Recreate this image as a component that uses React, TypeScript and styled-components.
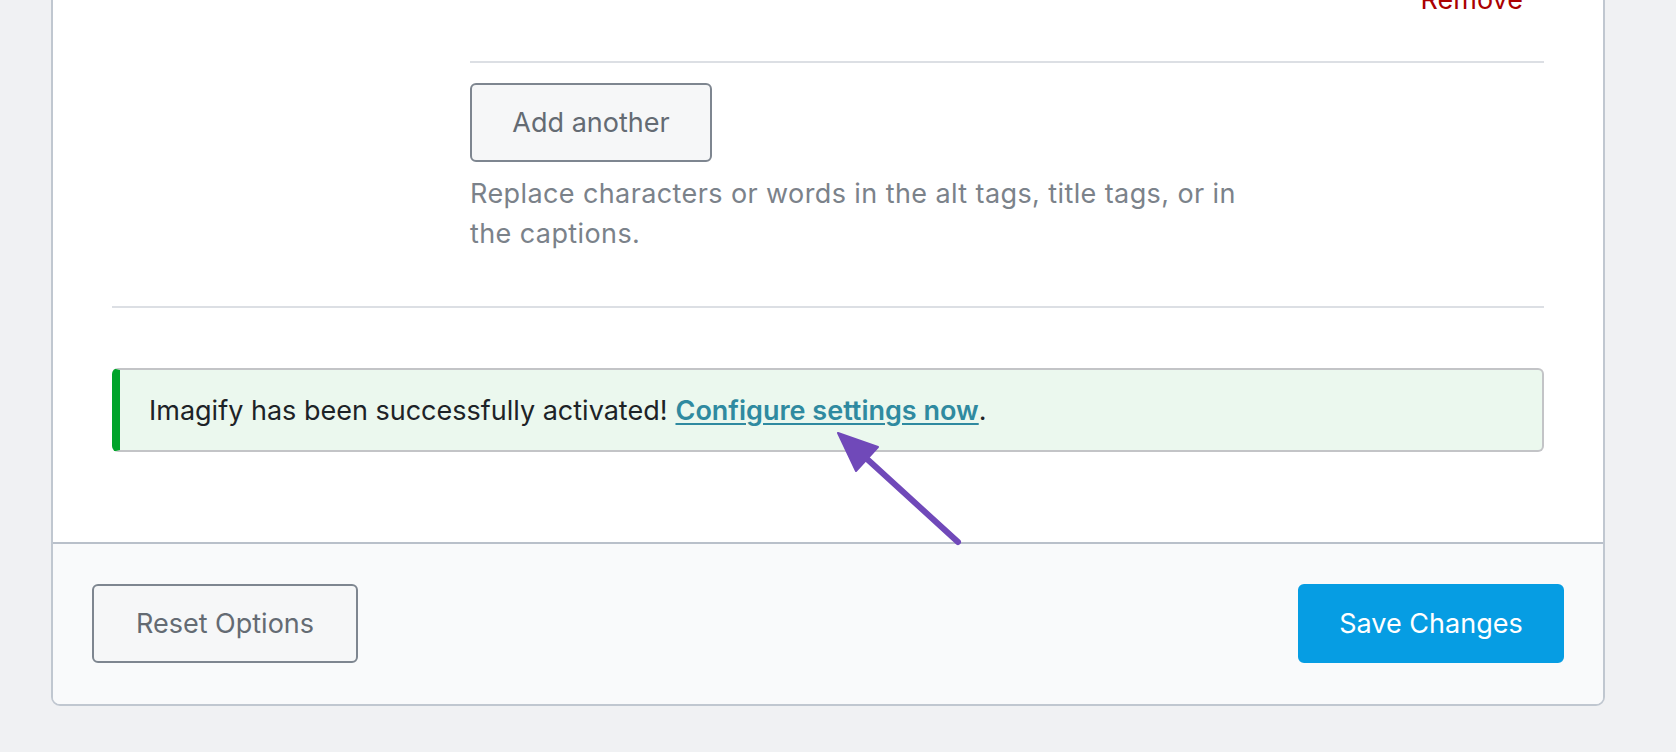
import React from 'react';
import styled, { createGlobalStyle } from 'styled-components';

const GlobalStyle = createGlobalStyle`
  html, body {
    margin: 0;
    padding: 0;
    background: #f0f1f3;
    font-family: Inter, "Noto Sans", "Liberation Sans", sans-serif;
    overflow: hidden;
  }
`;

const Page = styled.div`
  position: relative;
  height: 752px;
  overflow: hidden;
`;

const Card = styled.div`
  margin: -22px 0 0 51px;
  width: 1554px;
  box-sizing: border-box;
  background: #fff;
  border: 2px solid #c0c7d0;
  border-radius: 0 0 9px 9px;
  overflow: hidden;
`;

const Body = styled.div`
  padding: 0 59px 90px 59px;
`;

const FieldRow = styled.div`
  display: grid;
  grid-template-columns: 358px 1fr;
  border-bottom: 2px solid #dcdfe4;
  padding-bottom: 52px;
`;

const FieldCol = styled.div`
  display: flex;
  flex-direction: column;
  align-items: flex-start;
`;

const RemoveRow = styled.div`
  align-self: stretch;
  display: flex;
  justify-content: flex-end;
  padding: 0 21px 41px 0;
  border-bottom: 2px solid #dcdfe4;
`;

const RemoveLink = styled.a`
  color: #a00;
  font-size: 27px;
  line-height: 40px;
  text-decoration: none;
`;

const Button = styled.button<{ $primary?: boolean }>`
  box-sizing: border-box;
  height: 79px;
  padding: 0;
  white-space: nowrap;
  border-radius: 6px;
  font-family: inherit;
  font-size: 27px;
  cursor: pointer;
  border: 2px solid ${({ $primary }) => ($primary ? '#069de3' : '#7e8690')};
  background: ${({ $primary }) => ($primary ? '#069de3' : '#f6f7f8')};
  color: ${({ $primary }) => ($primary ? '#fff' : '#646b73')};
`;

const AddButton = styled(Button)`
  margin-top: 20px;
  width: 242px;
`;

const Description = styled.p`
  margin: 12px 0 0;
  max-width: 800px;
  color: #7b828a;
  font-size: 27px;
  letter-spacing: 0.4px;
  line-height: 40px;
`;

const Notice = styled.div`
  margin-top: 60px;
  box-sizing: border-box;
  height: 84px;
  display: flex;
  align-items: center;
  padding-left: 29px;
  background: #ebf8ee;
  border: 2px solid #c3c4c7;
  border-left: 8px solid #00a32a;
  border-radius: 6px;
  color: #1d2327;
  font-size: 27px;
`;

const NoticeLink = styled.a`
  color: #2f8aa0;
  font-weight: 600;
  text-decoration: underline;
  text-underline-offset: 3px;
  text-decoration-thickness: 2px;
  margin-left: 8px;
`;

const Footer = styled.div`
  display: flex;
  justify-content: space-between;
  align-items: center;
  padding: 40px 39px 41px 39px;
  background: #f9fafb;
  border-top: 2px solid #b9c0ca;
`;

const FooterButton = styled(Button)`
  width: 266px;
`;

const Arrow = styled.svg`
  position: absolute;
  left: 0;
  top: 0;
  pointer-events: none;
`;

export default function App() {
  return (
    <Page>
      <GlobalStyle />
      <Card>
        <Body>
          <FieldRow>
            <div />
            <FieldCol>
              <RemoveRow>
                <RemoveLink href="#">Remove</RemoveLink>
              </RemoveRow>
              <AddButton>Add another</AddButton>
              <Description>
                Replace characters or words in the alt tags, title tags, or in the captions.
              </Description>
            </FieldCol>
          </FieldRow>
          <Notice>
            Imagify has been successfully activated!
            <NoticeLink href="#">Configure settings now</NoticeLink>.
          </Notice>
        </Body>
        <Footer>
          <FooterButton>Reset Options</FooterButton>
          <FooterButton $primary>Save Changes</FooterButton>
        </Footer>
      </Card>
      <Arrow width="1676" height="752" viewBox="0 0 1676 752">
        <line x1="958" y1="542" x2="855" y2="448" stroke="#7049b9" strokeWidth="6" strokeLinecap="round" />
        <polygon points="838,433 878,447 856,471" fill="#7049b9" stroke="#7049b9" strokeWidth="2" strokeLinejoin="round" />
      </Arrow>
    </Page>
  );
}
